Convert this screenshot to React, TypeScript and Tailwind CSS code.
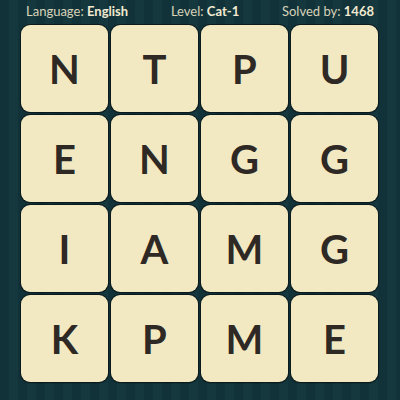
const letters = [
  "N", "T", "P", "U",
  "E", "N", "G", "G",
  "I", "A", "M", "G",
  "K", "P", "M", "E",
];

function Stat({ label, value }: { label: string; value: string }) {
  return (
    <span className="whitespace-nowrap">
      {label} <span className="font-bold text-[#f1ead0]">{value}</span>
    </span>
  );
}

export default function App() {
  return (
    <div className="h-[400px] w-[400px] overflow-hidden bg-[#12333a] bg-[repeating-linear-gradient(90deg,#12323a_0px,#12323a_9px,#15383f_9px,#15383f_18px)] font-['Lato',sans-serif]">
      {/* header stats */}
      <div className="flex h-[25px] items-center justify-between px-[26px] pb-[2px] text-[13px] leading-none text-[#d8d2b8]">
        <Stat label="Language:" value="English" />
        <Stat label="Level:" value="Cat-1" />
        <Stat label="Solved by:" value="1468" />
      </div>

      {/* letter board */}
      <div className="ml-[21px] grid w-[357px] grid-cols-4 gap-[3px]">
        {letters.map((l, i) => (
          <div
            key={i}
            className="flex h-[87px] items-center justify-center rounded-[9px] bg-[#f2e9c3] text-[40px] font-bold text-[#2e2924] shadow-[0_0_0_1px_#0b1a1c,0_1px_2px_rgba(0,0,0,0.5)]"
          >
            {l}
          </div>
        ))}
      </div>
    </div>
  );
}
